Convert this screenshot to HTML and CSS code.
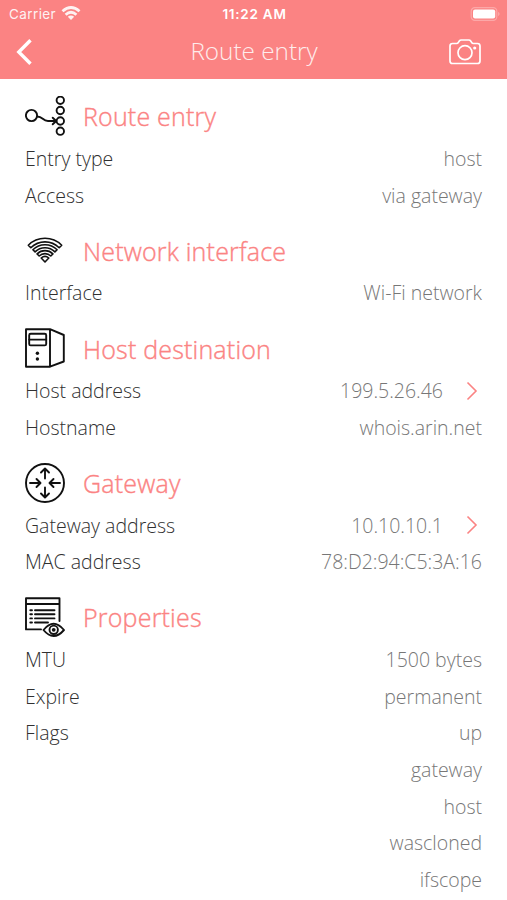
FILE: index.html
```html
<!DOCTYPE html>
<html lang="en">
<head>
<meta charset="utf-8">
<title>Route entry</title>
<link rel="stylesheet" href="styles.css">
</head>
<body>
<header class="top">
  <div class="status">
    <div class="carrier"><span>Carrier</span>
      <svg width="20" height="15" viewBox="0 0 20 15" fill="none" stroke="#fff" stroke-width="2.800"><path d="M1.500 5.300Q10-2.300 18.500 5.300M4.600 8.700Q10 3.900 15.400 8.700"/><path d="M6.800 10.700Q10 8.300 13.200 10.700L10 13.900Z" fill="#fff" stroke="none"/></svg>
    </div>
    <div class="clock">11:22 AM</div>
    <div class="battery">
      <svg width="31" height="14" viewBox="0 0 31 14"><rect x="1.200" y=".7" width="25.600" height="12.600" rx="3.600" fill="none" stroke="#fff" stroke-opacity=".3" stroke-width="1.200"/><rect x="3" y="2.400" width="22.200" height="9.200" rx="2" fill="#fff"/><path d="M28.300 4.800Q30.700 7 28.300 9.200Z" fill="#fff" fill-opacity=".4"/></svg>
    </div>
  </div>
  <nav class="nav">
    <svg class="back" width="18" height="28" viewBox="0 0 18 28" fill="none" stroke="#fff" stroke-width="3.400"><path d="M15.500 2.200L3.800 14L15.500 25.800"/></svg>
    <h1>Route entry</h1>
    <svg class="camera" width="34" height="28" viewBox="0 0 34 28" fill="none" stroke="#fff" stroke-width="1.700" stroke-linejoin="round"><path d="M4.500 5.500H8.600Q9.800 5.500 10.400 4.400L11.300 3Q12 2 13.200 2H20.800Q22 2 22.700 3L23.600 4.400Q24.200 5.500 25.400 5.500H29.500Q32 5.500 32 8V23Q32 25.500 29.500 25.500H4.500Q2 25.500 2 23V8Q2 5.500 4.500 5.500Z"/><circle cx="17" cy="14.700" r="7"/><circle cx="26.700" cy="10" r="1.600" fill="#fff" stroke="none"/></svg>
  </nav>
</header>
<main>
  <section>
    <h2><svg class="icon" viewBox="0 0 40 40"><circle cx="6.500" cy="19.500" r="5.600"/><circle cx="35.300" cy="4.300" r="3.700"/><circle cx="35.300" cy="14.500" r="3.700"/><circle cx="35.300" cy="25" r="3.700"/><circle cx="35.300" cy="35.200" r="3.700"/><path d="M12.300 20.500C18 20.500 17.500 25 23 25H31M27.700 21.700L31.200 25L27.700 28.300"/></svg><span>Route entry</span></h2>
    <dl><dt>Entry type</dt><dd>host</dd></dl>
    <dl><dt>Access</dt><dd>via gateway</dd></dl>
  </section>
  <section>
    <h2><svg class="icon thin" viewBox="0 0 40 40"><path d="M3.300 15.200A23.600 23.600 0 0 1 36.700 15.200L34.200 17.700A20.100 20.100 0 0 0 5.800 17.700Z"/><path d="M7.900 19.700A17.200 17.200 0 0 1 32.100 19.700L29.900 21.900A14 14 0 0 0 10.100 21.900Z"/><path d="M12.100 23.900A11.200 11.200 0 0 1 27.900 23.900L25.800 26A8.200 8.200 0 0 0 14.200 26Z"/><path d="M16.200 28Q20 24.600 23.800 28L20 32Z"/></svg><span>Network interface</span></h2>
    <dl><dt>Interface</dt><dd>Wi-Fi network</dd></dl>
  </section>
  <section>
    <h2><svg class="icon" viewBox="0 0 40 40"><path d="M1 1.200H25V38.700H1ZM25 1.200L38.800 7V33.500L25 38.700"/><rect x="4.200" y="5.800" width="17" height="11.600" rx="1.500"/><path d="M4.200 11.600H21.200"/><circle class="solid" cx="12.400" cy="25.200" r="1.700"/><circle class="solid" cx="12.400" cy="31" r="1.700"/></svg><span>Host destination</span></h2>
    <dl><dt>Host address</dt><dd>199.5.26.46<svg class="chev" viewBox="0 0 12 20"><path d="M1.500 1.500L10 10L1.500 18.500"/></svg></dd></dl>
    <dl><dt>Hostname</dt><dd>whois.arin.net</dd></dl>
  </section>
  <section>
    <h2><svg class="icon" viewBox="0 0 40 40"><circle cx="20" cy="20" r="19"/><path d="M20 15.500V6M16 9.500L20 5.500L24 9.500M20 24.500V34M16 30.500L20 34.500L24 30.500M5 20H15M11.500 16L15.500 20L11.500 24M35 20H25M28.500 16L24.500 20L28.500 24"/></svg><span>Gateway</span></h2>
    <dl><dt>Gateway address</dt><dd>10.10.10.1<svg class="chev" viewBox="0 0 12 20"><path d="M1.500 1.500L10 10L1.500 18.500"/></svg></dd></dl>
    <dl><dt>MAC address</dt><dd>78:D2:94:C5:3A:16</dd></dl>
  </section>
  <section>
    <h2><svg class="icon" viewBox="0 0 40 40"><path d="M16 32.400H1V1.200H34.500V24M1 7H34.500M10 13.200H29.500M10 17.300H29.500M10 21.400H29.500M10 25.500H23M5.300 13.200H7M5.300 17.300H7M5.300 21.400H7M5.300 25.500H7"/><path d="M18.500 33Q28.500 20.500 39 33Q28.500 45 18.500 33Z"/><circle cx="28.700" cy="32.800" r="4.200"/><circle class="solid" cx="28.700" cy="32.800" r="1.900"/></svg><span>Properties</span></h2>
    <dl><dt>MTU</dt><dd>1500 bytes</dd></dl>
    <dl><dt>Expire</dt><dd>permanent</dd></dl>
    <dl><dt>Flags</dt><dd>up</dd><dd>gateway</dd><dd>host</dd><dd>wascloned</dd><dd>ifscope</dd></dl>
  </section>
</main>
</body>
</html>
```
FILE: styles.css
```css
* { box-sizing: border-box; margin: 0; padding: 0; }
body { width: 507px; height: 900px; overflow: hidden; background: #fff; font-family: "Open Sans", sans-serif; font-weight: 300; }
svg { display: block; flex: none; }
.top { height: 79.300px; background: #fb8383; color: #fff; }
.status { height: 27px; display: grid; grid-template-columns: 1fr auto 1fr; align-items: center; padding: 0 6px 0 9px; font: 400 13.500px/16px Inter, sans-serif; }
.carrier { display: flex; align-items: center; gap: 5px; letter-spacing: .4px; opacity: .9; }
.clock { font-weight: 600; font-size: 13.500px; letter-spacing: .75px; padding-right: 1px; }
.battery { justify-self: end; }
.nav { height: 50px; display: grid; grid-template-columns: 1fr auto 1fr; align-items: center; padding: 0 25px 0 15px; }
.nav h1 { font-size: 24.300px; line-height: 34px; font-weight: 300; opacity: .85; padding: 0 0 3px 11px; }
.camera { justify-self: end; }
main { padding-top: .7px; }
h2 { height: 61px; padding: 16px 0 5px 25px; display: flex; align-items: center; gap: 18px; font-size: 25px; line-height: 34px; font-weight: 300; letter-spacing: .2px; -webkit-text-stroke: .4px #fb8383; color: #fb8383; }
h2 span { padding-top: 1px; }
.icon { width: 40px; height: 40px; fill: none; stroke: #111; stroke-width: 1.900; stroke-linejoin: round; stroke-linecap: round; }
.thin { stroke-width: 1.600; }
.solid { fill: #111; stroke: none; }
dl { display: grid; grid-template-columns: auto 1fr; padding: 0 25px; font-size: 19.500px; line-height: 36.700px; }
dt { color: #303030; grid-column: 1; }
dd { color: #777; grid-column: 2; display: flex; justify-content: flex-end; align-items: center; height: 36.700px; }
.chev { width: 12px; height: 20px; margin: -1px 4px 0 23px; fill: none; stroke: #fb8383; stroke-width: 1.600; }
```
